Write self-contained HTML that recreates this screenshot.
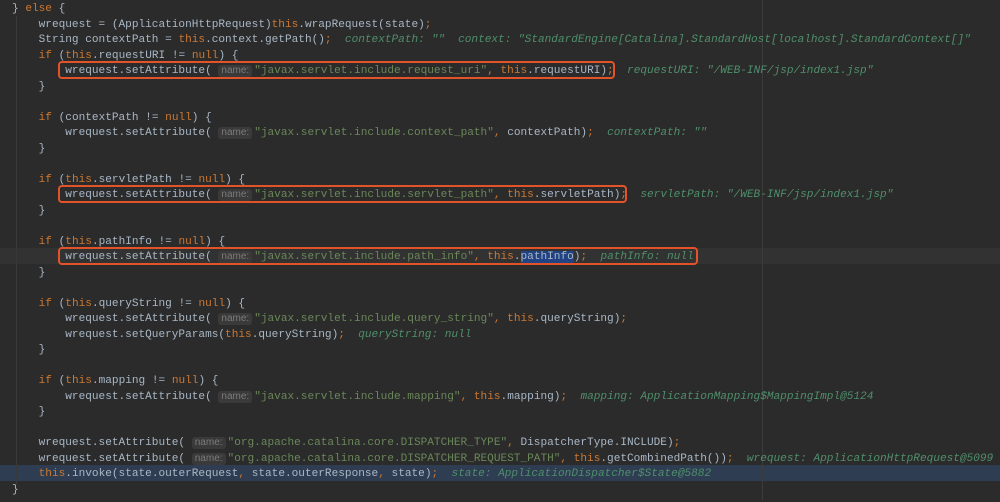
<!DOCTYPE html>
<html><head><meta charset="utf-8"><style>
body{margin:0;width:1000px;height:500px;background:#2b2b2b;overflow:hidden;position:relative;font-family:"Liberation Mono",monospace;font-size:11.1px;color:#a9b7c6}
#c{position:absolute;left:0;top:2px;width:1000px;height:500px}
.l{position:absolute;left:0;width:1000px;height:15.5px;line-height:15.5px;white-space:pre;padding-left:12px;box-sizing:border-box}
.k{color:#cc7832}.s{color:#6a8759}
.d{color:#4f8f6b;font-style:italic}
.h{display:inline-block;background:#3a3a3a;color:#7c7c7c;font-family:"Liberation Sans",sans-serif;font-size:10px;line-height:12px;padding:0 3px;border-radius:3px;margin-right:2px}
.box{position:absolute;border:2px solid #e2532a;border-radius:4px;box-sizing:border-box}
.g{position:absolute;width:1px;background:#393939}
.sel{background:#214283}
</style></head><body>
<div style="position:absolute;left:0;top:248px;width:1000px;height:15.5px;background:#323232"></div>
<div style="position:absolute;left:0;top:465px;width:1000px;height:15.5px;background:#2e3d52"></div>
<div class="g" style="left:16px;top:16px;height:468px"></div>
<div style="position:absolute;left:762px;top:0;width:1px;height:500px;background:#3c3c3c"></div>
<div id="c">
<div class="l" style="top:0px">} <span class="k">else</span> {</div>
<div class="l" style="top:15.5px">    wrequest = (ApplicationHttpRequest)<span class="k">this</span>.wrapRequest(state)<span class="k">;</span></div>
<div class="l" style="top:31px">    String contextPath = <span class="k">this</span>.context.getPath()<span class="k">;</span>  <span class="d">contextPath: ""  context: "StandardEngine[Catalina].StandardHost[localhost].StandardContext[]"</span></div>
<div class="l" style="top:46.5px">    <span class="k">if</span> (<span class="k">this</span>.requestURI != <span class="k">null</span>) {</div>
<div class="l" style="top:62px">        wrequest.setAttribute( <span class="h">name:</span><span class="s">"javax.servlet.include.request_uri"</span><span class="k">, this</span>.requestURI)<span class="k">;</span>  <span class="d">requestURI: "/WEB-INF/jsp/index1.jsp"</span></div>
<div class="l" style="top:77.5px">    }</div>
<div class="l" style="top:108.5px">    <span class="k">if</span> (contextPath != <span class="k">null</span>) {</div>
<div class="l" style="top:124px">        wrequest.setAttribute( <span class="h">name:</span><span class="s">"javax.servlet.include.context_path"</span><span class="k">,</span> contextPath)<span class="k">;</span>  <span class="d">contextPath: ""</span></div>
<div class="l" style="top:139.5px">    }</div>
<div class="l" style="top:170.5px">    <span class="k">if</span> (<span class="k">this</span>.servletPath != <span class="k">null</span>) {</div>
<div class="l" style="top:186px">        wrequest.setAttribute( <span class="h">name:</span><span class="s">"javax.servlet.include.servlet_path"</span><span class="k">, this</span>.servletPath)<span class="k">;</span>  <span class="d">servletPath: "/WEB-INF/jsp/index1.jsp"</span></div>
<div class="l" style="top:201.5px">    }</div>
<div class="l" style="top:232.5px">    <span class="k">if</span> (<span class="k">this</span>.pathInfo != <span class="k">null</span>) {</div>
<div class="l" style="top:248px">        wrequest.setAttribute( <span class="h">name:</span><span class="s">"javax.servlet.include.path_info"</span><span class="k">, this</span>.<span class="sel">pathInfo</span>)<span class="k">;</span>  <span class="d">pathInfo: null</span></div>
<div class="l" style="top:263.5px">    }</div>
<div class="l" style="top:294.5px">    <span class="k">if</span> (<span class="k">this</span>.queryString != <span class="k">null</span>) {</div>
<div class="l" style="top:310px">        wrequest.setAttribute( <span class="h">name:</span><span class="s">"javax.servlet.include.query_string"</span><span class="k">, this</span>.queryString)<span class="k">;</span></div>
<div class="l" style="top:325.5px">        wrequest.setQueryParams(<span class="k">this</span>.queryString)<span class="k">;</span>  <span class="d">queryString: null</span></div>
<div class="l" style="top:341px">    }</div>
<div class="l" style="top:372px">    <span class="k">if</span> (<span class="k">this</span>.mapping != <span class="k">null</span>) {</div>
<div class="l" style="top:387.5px">        wrequest.setAttribute( <span class="h">name:</span><span class="s">"javax.servlet.include.mapping"</span><span class="k">, this</span>.mapping)<span class="k">;</span>  <span class="d">mapping: ApplicationMapping$MappingImpl@5124</span></div>
<div class="l" style="top:403px">    }</div>
<div class="l" style="top:434px">    wrequest.setAttribute( <span class="h">name:</span><span class="s">"org.apache.catalina.core.DISPATCHER_TYPE"</span><span class="k">,</span> DispatcherType.INCLUDE)<span class="k">;</span></div>
<div class="l" style="top:449.5px">    wrequest.setAttribute( <span class="h">name:</span><span class="s">"org.apache.catalina.core.DISPATCHER_REQUEST_PATH"</span><span class="k">, this</span>.getCombinedPath())<span class="k">;</span>  <span class="d">wrequest: ApplicationHttpRequest@5099</span></div>
<div class="l" style="top:465px">    <span class="k">this</span>.invoke(state.outerRequest<span class="k">,</span> state.outerResponse<span class="k">,</span> state)<span class="k">;</span>  <span class="d">state: ApplicationDispatcher$State@5882</span></div>
<div class="l" style="top:480.5px">}</div>
</div>
<div class="box" style="left:58px;top:61px;width:557px;height:18px"></div>
<div class="box" style="left:58px;top:185px;width:569px;height:18px"></div>
<div class="box" style="left:58px;top:247px;width:640px;height:18px"></div>
</body></html>
